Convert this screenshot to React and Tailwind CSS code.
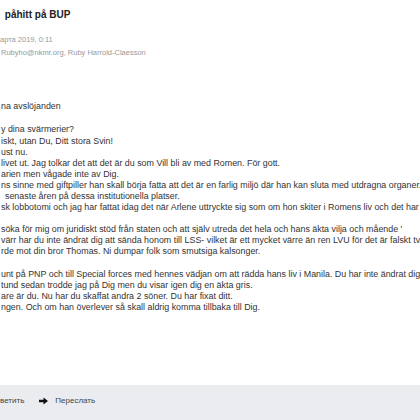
import React from 'react';

const paragraphs = [
  [{ text: 'na avslöjanden' }],
  [
    { text: 'y dina svärmerier?' },
    { text: 'iskt, utan Du, Ditt stora Svin!' },
    { text: 'ust nu.' },
    { text: 'livet ut. Jag tolkar det att det är du som Vill bli av med Romen. För gott.' },
    { text: 'arien men vågade inte av Dig.' },
    { text: 'ns sinne med giftpiller han skall börja fatta att det är en farlig miljö där han kan sluta med utdragna organer.' },
    { text: 'senaste åren på dessa institutionella platser.', indent: true },
    { text: 'sk lobbotomi och jag har fattat idag det när Arlene uttryckte sig som om hon skiter i Romens liv och det har hon gjort' },
  ],
  [
    { text: "söka för mig om juridiskt stöd från staten och att själv utreda det hela och hans äkta vilja och mående '" },
    { text: 'värr har du inte ändrat dig att sända honom till LSS- vilket är ett mycket värre än ren LVU för det är falskt två gånger' },
    { text: 'rde mot din bror Thomas. Ni dumpar folk som smutsiga kalsonger.' },
  ],
  [
    { text: 'unt på PNP och till Special forces med hennes vädjan om att rädda hans liv i Manila. Du har inte ändrat dig alls' },
    { text: 'tund sedan trodde jag på Dig men du visar igen dig en äkta gris.' },
    { text: 'are är du. Nu har du skaffat andra 2 söner. Du har fixat ditt.' },
    { text: 'ngen. Och om han överlever så skall aldrig komma tillbaka till Dig.' },
  ],
];

const App = () => {
  return (
    <div className="w-[420px] h-[420px] overflow-hidden bg-white flex flex-col font-['Liberation_Sans',Arial,sans-serif]">
      {/* Header */}
      <div className="pt-[8px] pl-[2px] text-[10px] leading-[14px] font-bold text-[#222] whitespace-nowrap">
        &nbsp;påhitt på BUP
      </div>
      <div className="mt-[11px] text-[7.5px] leading-[13px] text-[#999] whitespace-nowrap">арта 2019, 0:11</div>
      <div className="text-[7.5px] leading-[13px] text-[#999] whitespace-nowrap pl-[1px]">
        Rubyho@nkmr.org, Ruby Harrold-Claesson
      </div>

      {/* Body */}
      <div className="mt-[42px] flex-1 text-[8.9px] leading-[11.1px] text-[#333]">
        {paragraphs.map((para, i) => (
          <div key={i} className={i === 0 ? '' : i === 1 ? 'mt-[12.4px]' : 'mt-[11px]'}>
            {para.map((line, j) => (
              <div key={j} className={`whitespace-nowrap ${line.indent ? 'pl-[5px]' : 'pl-[1px]'}`}>
                {line.text}
              </div>
            ))}
          </div>
        ))}
      </div>

      {/* Footer actions */}
      <div className="h-[35px] shrink-0 bg-[#ebecf0] flex items-center pb-[3px] text-[8px] text-[#444] whitespace-nowrap">
        <span>ветить</span>
        <svg className="ml-[15px]" width="9" height="8" viewBox="0 0 10 8">
          <path d="M0 2.6h5V0l5 4-5 4V5.4H0z" fill="#111" />
        </svg>
        <span className="ml-[7px]">Переслать</span>
      </div>
    </div>
  );
};

export default App;
